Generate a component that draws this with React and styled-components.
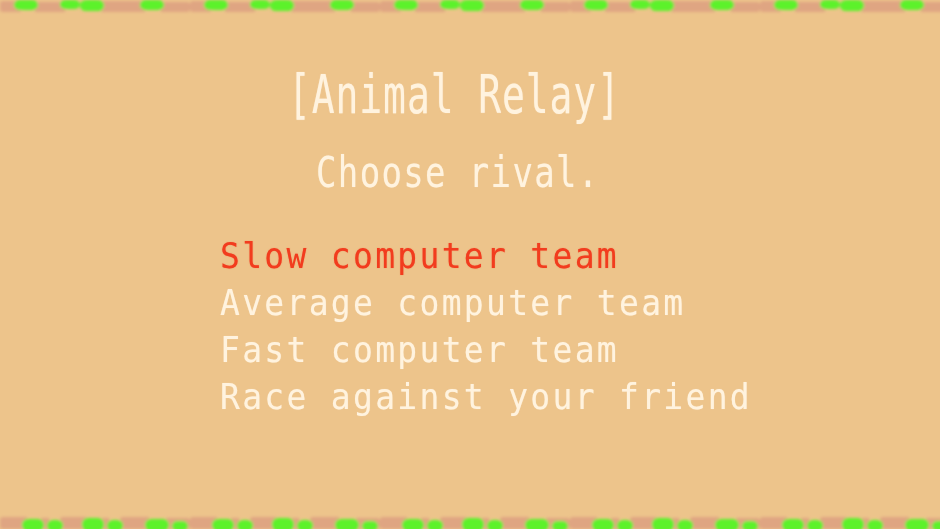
import React from "react";
import styled, { createGlobalStyle } from "styled-components";

const Global = createGlobalStyle`
  html, body { margin: 0; padding: 0; background: #edc48b; }
  body { overflow: hidden; }
`;

const Screen = styled.div`
  width: 940px;
  height: 529px;
  display: flex;
  flex-direction: column;
  background: #edc48b;
  overflow: hidden;
`;

const EdgeWrap = styled.div`
  height: 16px;
  flex: none;
  line-height: 0;
`;

const Main = styled.main`
  flex: 1;
  display: flex;
  flex-direction: column;
  padding-top: 54px;
  font-family: "DejaVu Sans Mono", "Liberation Mono", monospace;
  color: #fff3df;
`;

const Line = styled.div`
  height: ${(p) => p.$lh}px;
  line-height: ${(p) => p.$lh}px;
  padding-left: ${(p) => p.$indent}px;
  margin-top: ${(p) => p.$gap || 0}px;
  white-space: nowrap;
`;

const Glyphs = styled.span`
  display: inline-block;
  font-size: ${(p) => p.$size}px;
  letter-spacing: ${(p) => p.$track}px;
  transform: scaleY(${(p) => p.$stretch});
  transform-origin: 50% 50%;
  color: ${(p) => (p.$active ? "#f23c1e" : "#fff3df")};
  text-shadow: 0 0 1px ${(p) => (p.$active ? "rgba(242,60,30,0.5)" : "rgba(255,243,223,0.5)")};
`;

const Menu = styled.ul`
  list-style: none;
  margin: 40px 0 0;
  padding: 0 0 0 220px;
`;

const Item = styled.li`
  height: 47px;
  line-height: 47px;
  white-space: nowrap;
`;

// one repeat of the grass fringe: [x, y, w, h, kind]
const TOP_TILE = [
  [0, 1, 22, 11, "p"], [34, 2, 32, 10, "p"], [100, 1, 46, 11, "p"], [160, 2, 30, 10, "p"],
  [14, 0, 24, 10, "g"], [60, 0, 20, 9, "g"], [80, 0, 24, 11, "g"], [140, 0, 24, 10, "g"],
];
const BOTTOM_TILE = [
  [0, 4, 28, 12, "p"], [40, 5, 10, 11, "p"], [60, 4, 28, 12, "p"], [100, 5, 10, 11, "p"],
  [120, 4, 30, 12, "p"], [165, 5, 25, 11, "p"],
  [22, 6, 22, 12, "g"], [47, 7, 16, 11, "g"], [82, 5, 22, 13, "g"], [107, 7, 16, 11, "g"],
  [145, 6, 24, 12, "g"], [172, 8, 16, 10, "g"],
];

const TILE_W = 190;
const GREEN = "#5cf22a";
const SOIL = "#dc9e80";

// Blurry grass fringe along the top and bottom of the playfield
function Grass({ bottom }) {
  const tile = bottom ? BOTTOM_TILE : TOP_TILE;
  const id = bottom ? "grassBlurB" : "grassBlurT";
  const repeats = Math.ceil(940 / TILE_W) + 1;
  const soil = [];
  const blades = [];
  for (let r = 0; r < repeats; r++) {
    tile.forEach(([x, y, w, h, c], i) => {
      const rect = (
        <rect
          key={`${r}-${i}`}
          x={x + r * TILE_W}
          y={y}
          width={w}
          height={h}
          rx={c === "g" ? 6 : 3}
          fill={c === "g" ? GREEN : SOIL}
        />
      );
      (c === "g" ? blades : soil).push(rect);
    });
  }
  return (
    <svg width="940" height="16" viewBox="0 0 940 16" style={{ display: "block" }}>
      <defs>
        <filter id={id} filterUnits="userSpaceOnUse" x="-20" y="-20" width="980" height="56">
          <feGaussianBlur stdDeviation="1.8" />
        </filter>
      </defs>
      <g filter={`url(#${id})`}>
        <g opacity="0.8">{soil}</g>
        {blades}
      </g>
    </svg>
  );
}

const options = [
  "Slow computer team",
  "Average computer team",
  "Fast computer team",
  "Race against your friend",
];

export default function App() {
  const selected = 0;
  return (
    <>
      <Global />
      <Screen>
        <EdgeWrap>
          <Grass />
        </EdgeWrap>
        <Main>
          <Line $lh={50} $indent={288}>
            <Glyphs $size={38} $track={0.9} $stretch={1.4}>
              [Animal Relay]
            </Glyphs>
          </Line>
          <Line $lh={40} $indent={316} $gap={32}>
            <Glyphs $size={34} $track={1.35} $stretch={1.25}>
              Choose rival.
            </Glyphs>
          </Line>
          <Menu>
            {options.map((o, i) => (
              <Item key={o}>
                <Glyphs $size={33} $track={2.3} $stretch={1.1} $active={i === selected}>
                  {o}
                </Glyphs>
              </Item>
            ))}
          </Menu>
        </Main>
        <EdgeWrap>
          <Grass bottom />
        </EdgeWrap>
      </Screen>
    </>
  );
}
